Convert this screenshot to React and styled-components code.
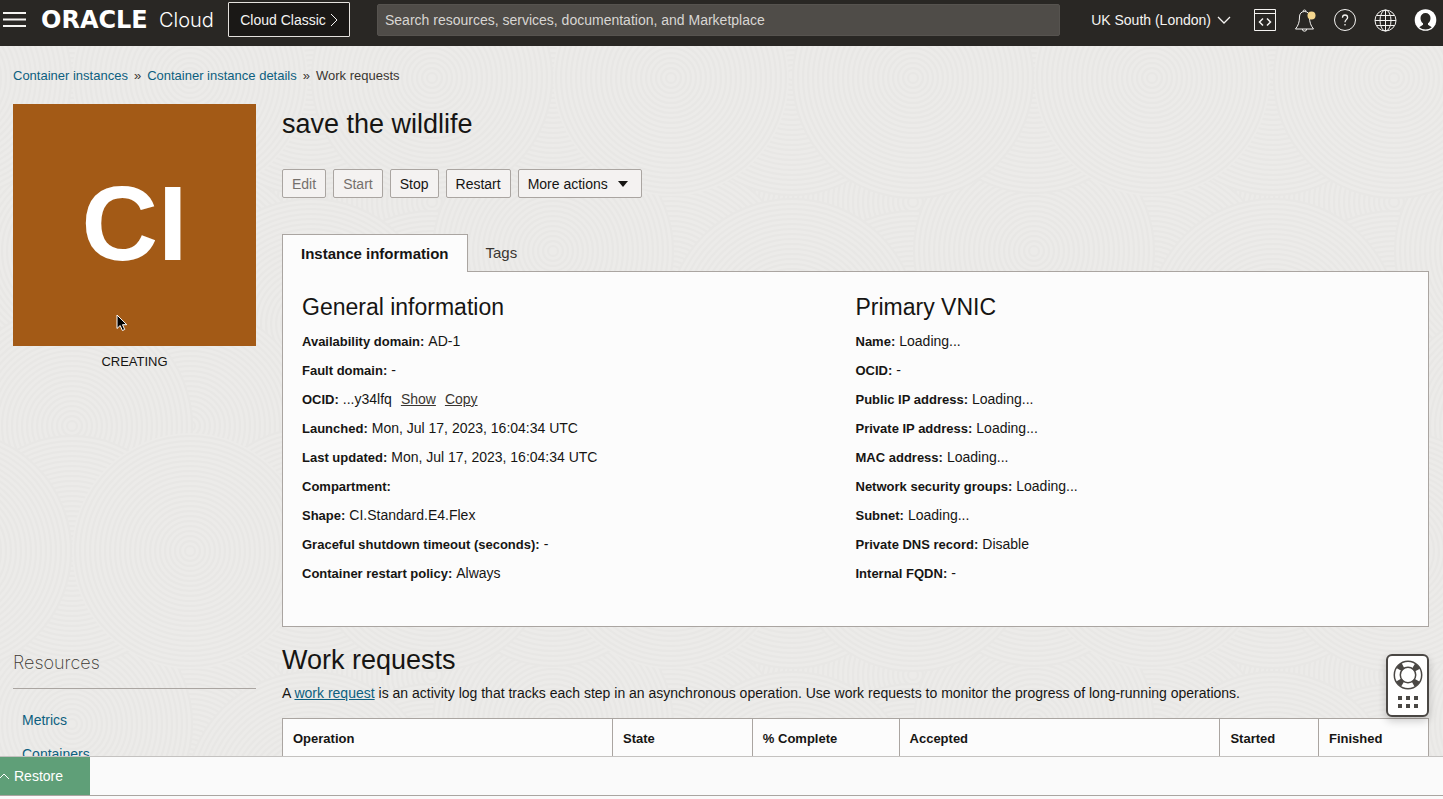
import React from "react";
import styled, { createGlobalStyle, css } from "styled-components";

const sans = `"Liberation Sans", Arial, sans-serif`;
const light = `Inter, "Liberation Sans", sans-serif`;
const line = "#aaa5a1";
const link = "#0d5f80";

const Global = createGlobalStyle`
  *, *::before, *::after { box-sizing: border-box; }
  html, body { height: 100%; }
  body { margin: 0; background: #ecebe9; font: 14px/20px ${sans}; color: #161513; }
  #root { height: 100%; }
  h1, h2, h3, p, ul, dl, dd { margin: 0; padding: 0; font-weight: 400; }
  button, input, select { font: inherit; color: inherit; }
`;

const Page = styled.div`
  position: relative;
  display: flex;
  flex-direction: column;
  height: 100vh;
  overflow: hidden;
  isolation: isolate;
`;

const Backdrop = styled.svg`
  position: absolute;
  inset: 0;
  width: 100%;
  height: 100%;
  z-index: -1;
`;

const Header = styled.header`
  display: flex;
  align-items: center;
  flex: none;
  height: 46px;
  padding: 0 6px 7px 3px;
  background: #292724;
  color: #f5f4f2;
`;

const IconButton = styled.button`
  display: flex;
  align-items: center;
  justify-content: center;
  width: 24px;
  height: 24px;
  padding: 0;
  border: 0;
  background: none;
  color: inherit;
`;

const Brand = styled.a`
  display: flex;
  align-items: center;
  gap: 6px;
  width: 187px;
  padding-left: 14px;
  color: #fff;
  text-decoration: none;
  white-space: nowrap;
`;

const BrandMark = styled.span`
  width: 112px;
  font: 700 24px/32px "DejaVu Sans", sans-serif;
`;

const BrandProduct = styled.span`
  font: 300 20px/32px ${light};
`;

const ClassicButton = styled.button`
  display: flex;
  align-items: center;
  justify-content: center;
  gap: 4px;
  flex: none;
  width: 122px;
  height: 35px;
  margin: 0 27px 0 14px;
  padding: 0;
  border: 1px solid #e4e1dd;
  border-radius: 1px;
  background: #1a1816;
`;

const Search = styled.input`
  flex: 1;
  min-width: 0;
  height: 32px;
  padding: 0 7px;
  border: 1px solid #56534f;
  border-radius: 2px;
  background: #4f4c48;
  &::placeholder { color: #d8d6d3; opacity: 1; }
`;

const Region = styled.button`
  display: flex;
  align-items: center;
  gap: 6px;
  flex: none;
  margin: 0 22px 0 31px;
  padding: 0;
  border: 0;
  background: none;
`;

const Tools = styled.div`
  display: flex;
  gap: 16px;
`;

const Body = styled.main`
  flex: 1;
  min-height: 0;
  overflow: hidden;
  padding: 20px 14px 0 13px;
`;

const Crumbs = styled.nav`
  display: flex;
  gap: 6px;
  height: 20px;
  margin-bottom: 18px;
  font-size: 13px;
  color: #3a3631;
`;

const Link = styled.a`
  color: ${link};
  text-decoration: ${(p) => (p.$underline ? "underline" : "none")};
`;

const Columns = styled.div`
  display: grid;
  grid-template-columns: 243px minmax(0, 1fr);
  column-gap: 26px;
`;

const Status = styled.div`
  text-align: center;
  font-size: 13px;
  line-height: 32px;
`;

const Tile = styled.div`
  display: flex;
  align-items: center;
  justify-content: center;
  height: 242px;
  padding-bottom: 4px;
  background: #a35a16;
  color: #fff;
  font-size: 106px;
  font-weight: 700;
`;

const Title = styled.h1`
  font-size: 27px;
  line-height: 40px;
`;

const Actions = styled.div`
  display: flex;
  gap: 7px;
  margin: 25px 0 36px;
`;

const ActionButton = styled.button`
  display: flex;
  align-items: center;
  gap: 10px;
  height: 29px;
  padding: 0 9px;
  border: 1px solid ${line};
  border-radius: 2px;
  background: #f4f2f1;
  color: #161513;
  &:disabled { color: #75706c; }
`;

const TabList = styled.div`
  display: flex;
`;

const Tab = styled.button`
  height: 37px;
  padding: 0 18px;
  border: 0;
  background: none;
  font-size: 15px;
  color: #3a3631;
  ${(p) => p.$active && css`
    position: relative;
    height: 38px;
    margin-bottom: -1px;
    border: 1px solid ${line};
    border-bottom: 0;
    background: #fcfcfc;
    color: #161513;
    font-weight: 700;
  `}
`;

const Panel = styled.section`
  display: grid;
  grid-template-columns: 1fr 1fr;
  padding: 19px 19px 38px;
  border: 1px solid ${line};
  background: #fcfcfc;
`;

const GroupTitle = styled.h2`
  font-size: 23px;
  line-height: 32px;
  margin-bottom: 4px;
`;

const Fact = styled.div`
  display: flex;
  align-items: baseline;
  gap: 4px;
  line-height: 29px;
`;

const Term = styled.dt`
  font-size: 13px;
  font-weight: 700;
`;

const InlineAction = styled.button`
  margin-left: 5px;
  padding: 0;
  border: 0;
  background: none;
  color: #3a3631;
  text-decoration: underline;
`;

const Resources = styled.aside`
  padding-top: 22px;
`;

const ResourcesTitle = styled.h2`
  height: 40px;
  border-bottom: 1px solid ${line};
  font: 200 18px/28px ${light};
  color: #3a3631;
`;

const ResourceList = styled.ul`
  padding: 14px 9px;
  list-style: none;
  line-height: 34px;
`;

const Requests = styled.section`
  padding-top: 13px;
`;

const Note = styled.p`
  margin: 3px 0 15px;
`;

const Table = styled.table`
  width: 100%;
  border-collapse: collapse;
  table-layout: fixed;
  background: #fcfcfc;
`;

const HeadCell = styled.th`
  width: ${(p) => p.$width};
  height: 41px;
  padding: 0 10px;
  border: 1px solid ${line};
  text-align: left;
  font-size: 13px;
`;

const Dock = styled.footer`
  flex: none;
  height: 43px;
  border-top: 1px solid #c4c2c0;
  background: #fafafa;
`;

const DockBar = styled.div`
  height: 39px;
  border-bottom: 1px solid ${line};
`;

const Restore = styled.button`
  display: flex;
  align-items: center;
  gap: 5px;
  width: 90px;
  height: 38px;
  padding: 0;
  border: 0;
  background: #5f9f78;
  color: #fff;
`;

const HelpWidget = styled.button`
  position: absolute;
  right: 14px;
  bottom: 82px;
  display: flex;
  flex-direction: column;
  align-items: center;
  gap: 6px;
  width: 43px;
  height: 63px;
  padding: 4px 0 0;
  border: 2px solid #4a4744;
  border-radius: 6px;
  background: #fff;
  box-shadow: 0 4px 8px rgba(0, 0, 0, 0.2);
`;

const Pointer = styled.svg`
  position: absolute;
  left: 116px;
  top: 314px;
`;

/* Overlapping discs of concentric rings; later discs cover earlier ones. */
const tile = { width: 481, height: 473 };
const discs = [
  [190, 130, 125], [432, 156, 125], [190, 240, 125], [311, 400, 125],
  [432, 290, 125], [432, 400, 115], [311, 278, 125], [72, 205, 120],
  [190, 380, 120], [72, 380, 120], [311, 29, 120], [72, 32, 115],
  [190, 32, 118], [432, 32, 120],
];
const copies = [-1, 0, 1].flatMap((row) => [-1, 0, 1].map((col) => [col * tile.width, row * tile.height]));

const Rings = ({ cx, cy, r }) => (
  <g>
    <circle cx={cx} cy={cy} r={r} fill="#ecebe9" />
    {Array.from({ length: Math.floor(r / 5) }, (_, i) => (
      <circle key={i} cx={cx} cy={cy} r={(i + 1) * 5} fill="none" stroke="#e8e7e5" strokeWidth="2" />
    ))}
  </g>
);

const Pattern = () => (
  <Backdrop aria-hidden="true">
    <defs>
      <pattern id="rings" width={tile.width} height={tile.height} y="46" patternUnits="userSpaceOnUse">
        {discs.map(([x, y, r]) => copies.map(([dx, dy]) => (
          <Rings key={`${x}.${y}.${dx}.${dy}`} cx={x + dx} cy={y + dy} r={r} />
        )))}
      </pattern>
    </defs>
    <rect width="100%" height="100%" fill="url(#rings)" />
  </Backdrop>
);

const Icon = ({ size = 24, children, ...rest }) => (
  <svg width={size} height={size} viewBox={`0 0 ${size} ${size}`} fill="none" stroke="currentColor" aria-hidden="true" {...rest}>
    {children}
  </svg>
);

const general = [
  ["Availability domain:", "AD-1"],
  ["Fault domain:", "-"],
  ["OCID:", "...y34lfq", ["Show", "Copy"]],
  ["Launched:", "Mon, Jul 17, 2023, 16:04:34 UTC"],
  ["Last updated:", "Mon, Jul 17, 2023, 16:04:34 UTC"],
  ["Compartment:", ""],
  ["Shape:", "CI.Standard.E4.Flex"],
  ["Graceful shutdown timeout (seconds):", "-"],
  ["Container restart policy:", "Always"],
];

const vnic = [
  ["Name:", "Loading..."],
  ["OCID:", "-"],
  ["Public IP address:", "Loading..."],
  ["Private IP address:", "Loading..."],
  ["MAC address:", "Loading..."],
  ["Network security groups:", "Loading..."],
  ["Subnet:", "Loading..."],
  ["Private DNS record:", "Disable"],
  ["Internal FQDN:", "-"],
];

const columns = [
  ["Operation", "28.8%"], ["State", "12.2%"], ["% Complete", "12.8%"],
  ["Accepted", "28%"], ["Started", "8.6%"], ["Finished", "9.6%"],
];

const Group = ({ title, facts }) => (
  <div>
    <GroupTitle>{title}</GroupTitle>
    <dl>
      {facts.map(([term, value, actions = []]) => (
        <Fact key={term}>
          <Term>{term}</Term>
          <dd>{value}</dd>
          {actions.map((a) => <InlineAction key={a} type="button">{a}</InlineAction>)}
        </Fact>
      ))}
    </dl>
  </div>
);

export default function App() {
  return (
    <Page>
      <Global />
      <Pattern />
      <Header>
        <IconButton aria-label="Navigation menu">
          <Icon strokeWidth="2"><path d="M0 5h23M0 11.500h23M0 18h23" /></Icon>
        </IconButton>
        <Brand href="#home">
          <BrandMark>ORACLE</BrandMark>
          <BrandProduct>Cloud</BrandProduct>
        </Brand>
        <ClassicButton type="button">
          Cloud Classic
          <svg width="8" height="14" fill="none" stroke="currentColor" aria-hidden="true"><path d="M1 1l6 6-6 6" /></svg>
        </ClassicButton>
        <Search type="search" aria-label="Search" placeholder="Search resources, services, documentation, and Marketplace" />
        <Region type="button">
          UK South (London)
          <svg width="14" height="8" fill="none" stroke="currentColor" strokeWidth="1.3" aria-hidden="true"><path d="M1 1l6 6 6-6" /></svg>
        </Region>
        <Tools>
          <IconButton aria-label="Developer tools">
            <Icon><path d="M1.500 1.500h21v21h-21zM1.500 5.500h21" /><path d="M10 10.500l-3.500 3.500 3.500 3.500M14 10.500l3.500 3.500-3.500 3.500" strokeWidth="1.500" /></Icon>
          </IconButton>
          <IconButton aria-label="Announcements">
            <Icon>
              <path d="M11.500 3.500c-3.500 0-5 2.500-5 5.500 0 5.500-1.300 8.500-4 12h18c-2.700-3.500-4-6.500-4-12 0-3-1.500-5.500-5-5.500zM10 3.500a1.500 1.500 0 013 0M9.300 21a2.200 2.200 0 004.400 0" />
              <circle cx="18.500" cy="7.500" r="4" fill="#f5d78e" stroke="none" />
            </Icon>
          </IconButton>
          <IconButton aria-label="Help">
            <Icon>
              <circle cx="12" cy="12" r="10.500" />
              <path d="M9.500 9.800c0-1.800 1-2.800 2.500-2.800s2.600 1 2.600 2.500c0 2.100-2.600 2.200-2.600 4.700M12 16v1.600" strokeWidth="1.300" />
            </Icon>
          </IconButton>
          <IconButton aria-label="Language">
            <Icon>
              <circle cx="12.500" cy="12.500" r="10.500" />
              <ellipse cx="12.500" cy="12.500" rx="5.500" ry="10.500" />
              <path d="M12.500 2v21M2 12.500h21M4 7.500h17M4 17.500h17" />
            </Icon>
          </IconButton>
          <IconButton aria-label="Profile">
            <Icon stroke="none">
              <circle cx="12.500" cy="12" r="10.800" fill="#fff" />
              <path d="M12.500 5a5 5 0 00-5 5c0 2.600 1 4.300 2.500 5.300v1.500l-3.800 2.500a9.800 9.800 0 0012.600 0L15 16.800v-1.500c1.500-1 2.500-2.700 2.500-5.300a5 5 0 00-5-5z" fill="#292724" />
            </Icon>
          </IconButton>
        </Tools>
      </Header>
      <Body>
        <Crumbs aria-label="Breadcrumb">
          <Link href="#instances">Container instances</Link>
          <span>»</span>
          <Link href="#details">Container instance details</Link>
          <span>»</span>
          <span>Work requests</span>
        </Crumbs>
        <Columns>
          <Status>
            <Tile>CI</Tile>
            CREATING
          </Status>
          <div>
            <Title>save the wildlife</Title>
            <Actions>
              <ActionButton disabled>Edit</ActionButton>
              <ActionButton disabled>Start</ActionButton>
              <ActionButton>Stop</ActionButton>
              <ActionButton>Restart</ActionButton>
              <ActionButton>
                More actions
                <svg width="14" height="6" aria-hidden="true"><path d="M0 0h10L5 6z" fill="#161513" /></svg>
              </ActionButton>
            </Actions>
            <TabList role="tablist">
              <Tab role="tab" aria-selected="true" $active>Instance information</Tab>
              <Tab role="tab" aria-selected="false">Tags</Tab>
            </TabList>
            <Panel>
              <Group title="General information" facts={general} />
              <Group title="Primary VNIC" facts={vnic} />
            </Panel>
          </div>
          <Resources>
            <ResourcesTitle>Resources</ResourcesTitle>
            <ResourceList>
              <li><Link href="#metrics">Metrics</Link></li>
              <li><Link href="#containers">Containers</Link></li>
            </ResourceList>
          </Resources>
          <Requests>
            <Title as="h2">Work requests</Title>
            <Note>
              A <Link href="#work-request" $underline>work request</Link> is an activity log that tracks each step in an
              asynchronous operation. Use work requests to monitor the progress of long-running operations.
            </Note>
            <Table>
              <thead>
                <tr>{columns.map(([name, width]) => <HeadCell key={name} scope="col" $width={width}>{name}</HeadCell>)}</tr>
              </thead>
            </Table>
          </Requests>
        </Columns>
      </Body>
      <Dock>
        <DockBar>
          <Restore type="button">
            <svg width="9" height="6" fill="none" stroke="currentColor" aria-hidden="true"><path d="M0 5l4-4 5 5" /></svg>
            Restore
          </Restore>
        </DockBar>
      </Dock>
      <HelpWidget aria-label="Support">
        <svg width="30" height="30" viewBox="0 0 30 30" fill="none" stroke="#4a4744" aria-hidden="true">
          <circle cx="15" cy="15" r="10.500" strokeWidth="6" strokeDasharray="5.500 10.993" strokeDashoffset="-5.500" />
          <circle cx="15" cy="15" r="13.700" strokeWidth="1.500" />
          <circle cx="15" cy="15" r="7.700" strokeWidth="1.500" />
        </svg>
        <svg width="20" height="12" fill="#4a4744" aria-hidden="true">
          <path d="M0 0h4v4H0zM8 0h4v4H8zM16 0h4v4h-4zM0 8h4v4H0zM8 8h4v4H8zM16 8h4v4h-4z" />
        </svg>
      </HelpWidget>
      <Pointer width="13" height="18" viewBox="0 0 13 18" aria-hidden="true">
        <path d="M1 1v13.500l3.200-3 2.200 5 2.300-1-2.200-4.800h4.300z" fill="#000" stroke="#fff" />
      </Pointer>
    </Page>
  );
}
